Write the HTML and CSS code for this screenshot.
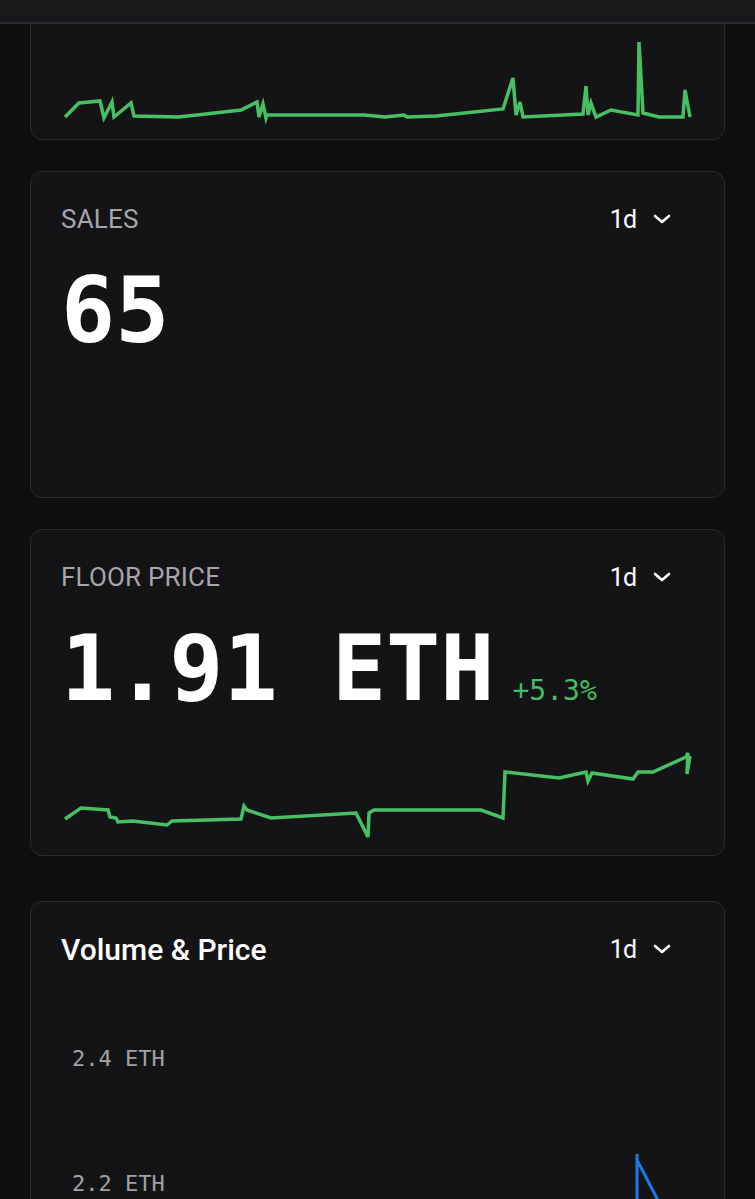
FILE: index.html
```html
<!DOCTYPE html>
<html lang="en">
<head>
    <meta charset="UTF-8">
    <meta name="viewport" content="width=device-width, initial-scale=1.0">
    <title>Collection Stats</title>
    <link rel="stylesheet" href="styles.css">
</head>
<body>
    <div class="topbar"></div>

    <div class="main">
        <!-- volume card, scrolled mostly out of view -->
        <div class="card card-partial">
            <svg class="spark" viewBox="0 0 633 124" preserveAspectRatio="none">
                <polyline points="4,116 18,102 39,100 43,117 51,101 53,116 70,102 73,115 117,116 136,114 180,109 196,101 198,116 202,103 205,117 206,114 303,114 324,116 343,114 346,116 375,115 442,108 452,77 455,114 459,101 462,116 522,113 525,85 527,114 530,102 535,116 550,109 577,114 578,41 582,112 598,116 622,116 624,89 629,116"/>
            </svg>
        </div>

        <div class="card">
            <div class="card-head">
                <span class="label">SALES</span>
                <button class="range">1d
                    <svg class="chev" viewBox="0 0 18 10"><polyline points="2,2 9,8 16,2"/></svg>
                </button>
            </div>
            <div class="value-row">
                <span class="value">65</span>
            </div>
            <div class="chart-space"></div>
        </div>

        <div class="card">
            <div class="card-head">
                <span class="label">FLOOR PRICE</span>
                <button class="range">1d
                    <svg class="chev" viewBox="0 0 18 10"><polyline points="2,2 9,8 16,2"/></svg>
                </button>
            </div>
            <div class="value-row">
                <span class="value">1.91 ETH</span>
                <span class="change">+5.3%</span>
            </div>
            <svg class="spark spark-tall" viewBox="0 0 633 128" preserveAspectRatio="none">
                <polyline points="4,106 20,95 34,96 47,97 49,104 55,105 57,109 72,108 106,112 111,108 180,106 183,93 186,97 210,105 295,100 307,124 308,100 313,97 420,97 442,105 444,59 498,65 525,59 527,68 531,60 572,66 577,59 592,59 625,44 627,40 626,61 629,43"/>
            </svg>
        </div>

        <div class="card card-chart">
            <div class="card-head">
                <span class="title">Volume &amp; Price</span>
                <button class="range">1d
                    <svg class="chev" viewBox="0 0 18 10"><polyline points="2,2 9,8 16,2"/></svg>
                </button>
            </div>
            <div class="chart">
                <div class="axis">
                    <div class="tick">2.4 ETH</div>
                    <div class="tick">2.2 ETH</div>
                    <div class="tick">2.0 ETH</div>
                </div>
                <svg class="price-line" viewBox="0 0 633 380" preserveAspectRatio="none">
                    <polyline points="576,160 576,106 576,112 602,162"/>
                </svg>
            </div>
        </div>
    </div>
</body>
</html>
```

FILE: styles.css
```css
body {
    margin: 0;
    background-color: #0e0e10;
    font-family: Roboto, "Liberation Sans", sans-serif;
    color: #ffffff;
}
.topbar {
    position: fixed;
    top: 0;
    left: 0;
    right: 0;
    height: 22px;
    background: #17171a;
    border-bottom: 2px solid #2c2c30;
    z-index: 10;
}
.main {
    display: flex;
    flex-direction: column;
    gap: 31px;
    padding: 0 30px;
}
.card {
    background: #141416;
    border: 1px solid #2a2a2e;
    border-radius: 12px;
    padding: 28px 30px 14px 30px;
}
.card-partial {
    padding-top: 0;
    border-top-left-radius: 0;
    border-top-right-radius: 0;
}
.card-head {
    display: flex;
    justify-content: space-between;
    align-items: center;
    height: 38px;
}
.label {
    font-size: 26px;
    color: #a6a6ab;
    letter-spacing: 0.2px;
}
.title {
    font-size: 30px;
    font-weight: 500;
    color: #ffffff;
}
.range {
    display: flex;
    align-items: center;
    gap: 17px;
    background: transparent;
    border: none;
    padding: 0;
    margin-right: 23px;
    font-family: Roboto, "Liberation Sans", sans-serif;
    font-size: 25px;
    letter-spacing: -1px;
    color: #ffffff;
    cursor: pointer;
}
.chev {
    width: 18px;
    height: 10px;
}
.chev polyline {
    fill: none;
    stroke: #ffffff;
    stroke-width: 2.6;
    stroke-linecap: round;
    stroke-linejoin: round;
}
.value-row {
    display: flex;
    align-items: baseline;
    gap: 18px;
    margin-top: 29px;
    height: 88px;
}
.value {
    font-family: "DejaVu Sans Mono", "Liberation Mono", monospace;
    font-size: 90px;
    font-weight: bold;
    line-height: 88px;
    color: #ffffff;
    white-space: pre;
}
.change {
    font-family: "DejaVu Sans Mono", "Liberation Mono", monospace;
    font-size: 28px;
    color: #45bd60;
}
.chart-space {
    height: 128px;
}
.spark {
    display: block;
    width: 100%;
    height: 124px;
}
.spark-tall {
    height: 128px;
}
.spark polyline {
    fill: none;
    stroke: #47bf63;
    stroke-width: 3.5;
    stroke-linejoin: miter;
}
.card-chart {
    margin-top: 14px;
}
.chart {
    position: relative;
    margin-top: 80px;
    height: 380px;
}
.axis {
    display: flex;
    flex-direction: column;
    padding-left: 11px;
}
.tick {
    height: 125px;
    font-family: "DejaVu Sans Mono", "Liberation Mono", monospace;
    font-size: 22px;
    line-height: 22px;
    color: #a2a2a6;
}
.price-line {
    position: absolute;
    top: 0;
    left: 0;
    width: 100%;
    height: 100%;
}
.price-line polyline {
    fill: none;
    stroke: #1c7ae6;
    stroke-width: 3;
}
```
